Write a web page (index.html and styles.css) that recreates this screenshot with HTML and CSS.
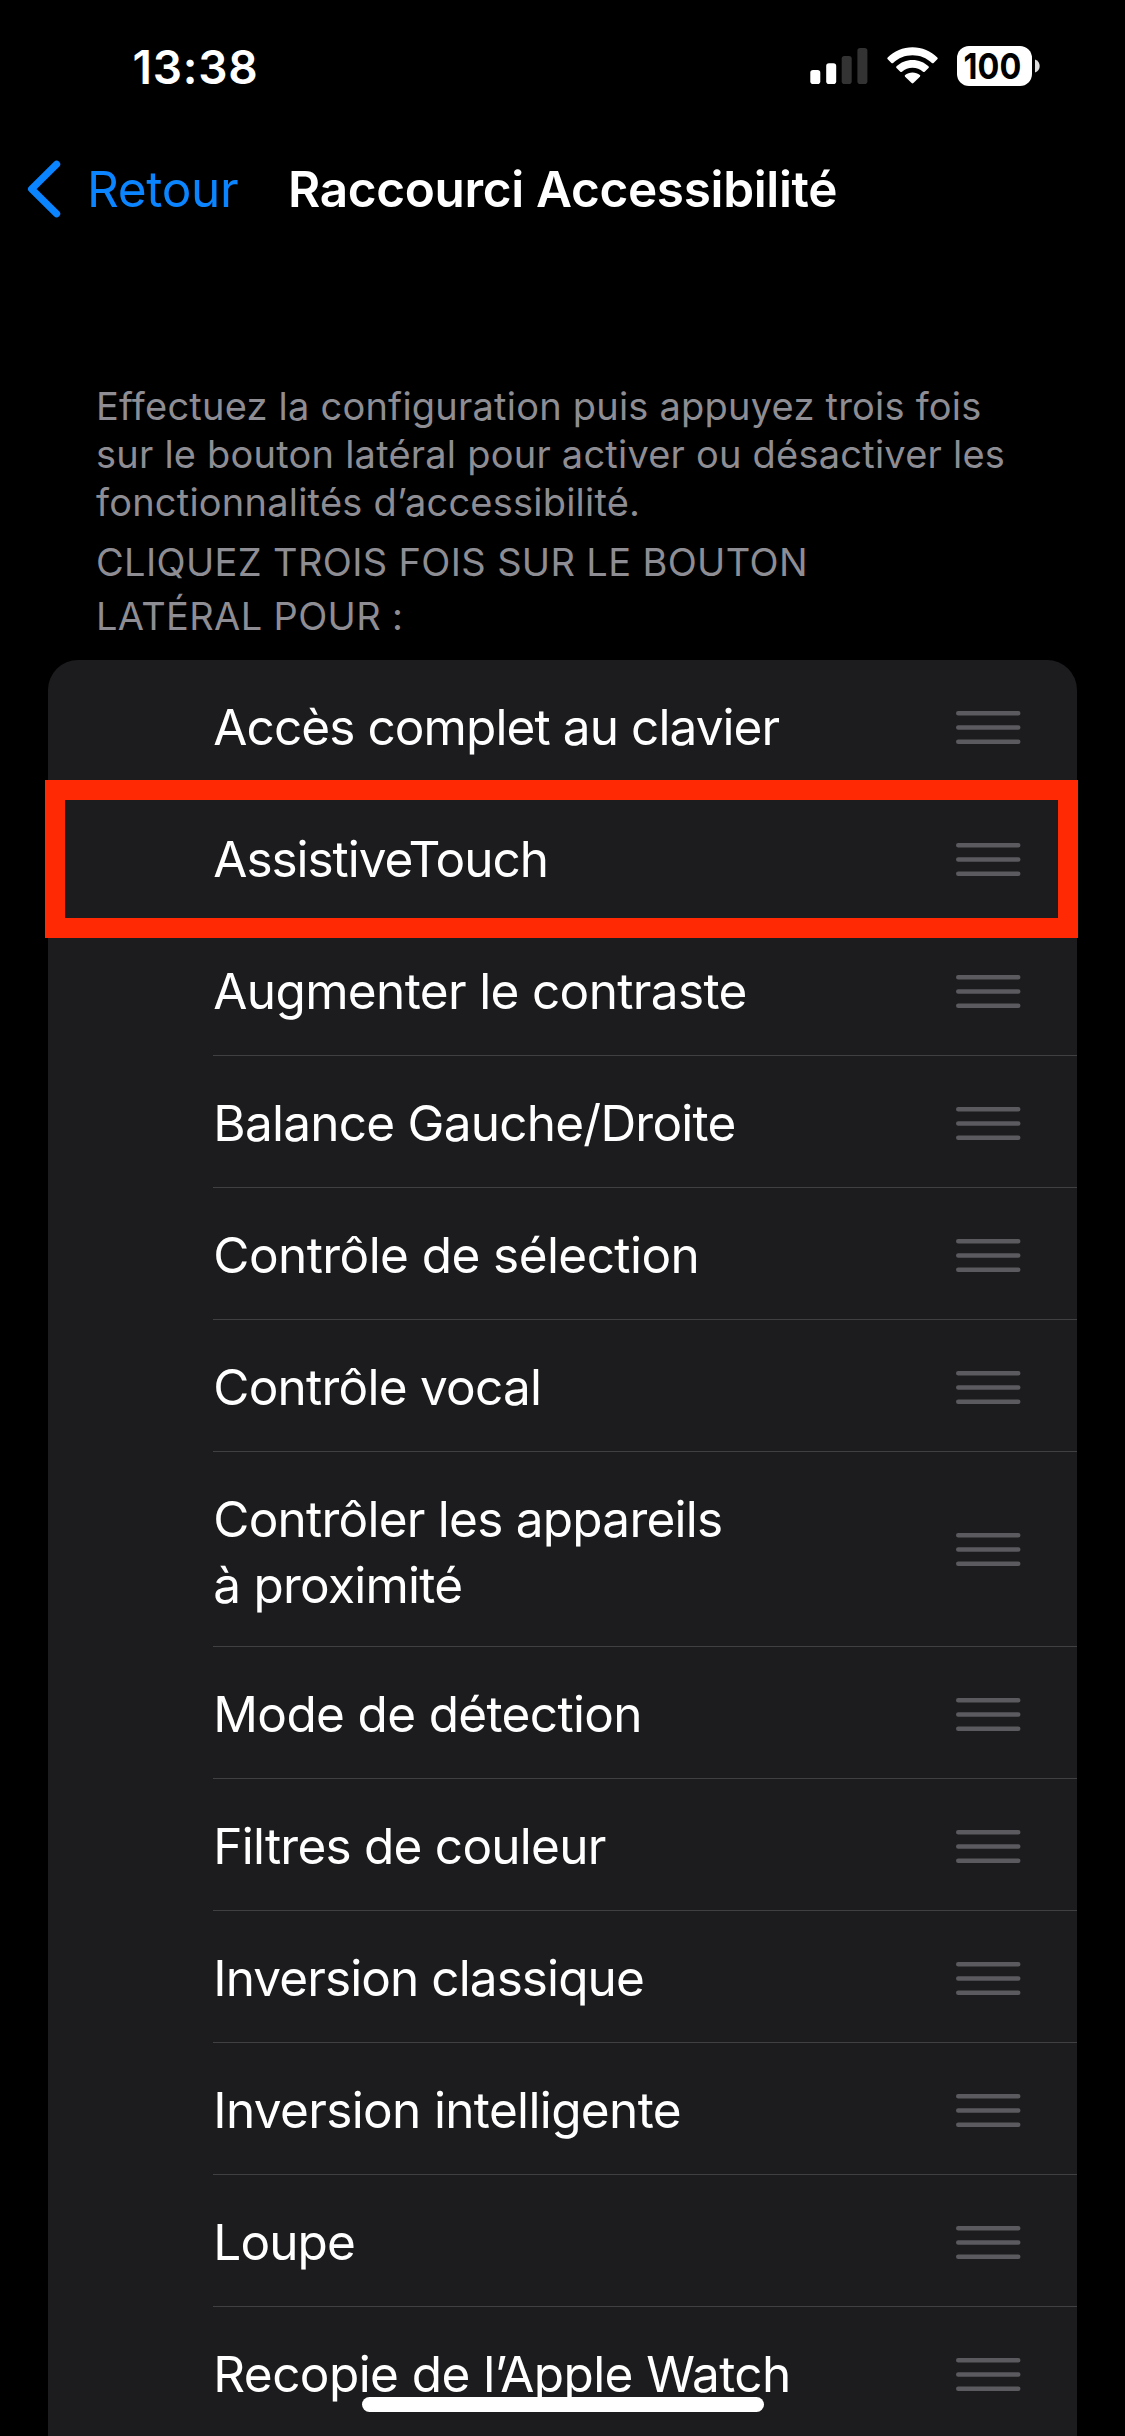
FILE: index.html
```html
<!DOCTYPE html>
<html lang="fr">
<head>
<meta charset="utf-8">
<title>Raccourci Accessibilité</title>
<link rel="stylesheet" href="styles.css">
</head>
<body>
<svg class="defs" width="0" height="0" aria-hidden="true">
  <symbol id="grip" viewBox="0 0 65 33">
    <path d="M2.2 2.2H62.3M2.2 16.5H62.3M2.2 30.8H62.3" stroke="#5a5a5f" stroke-width="4.4" stroke-linecap="round"/>
  </symbol>
</svg>
<div class="screen">
  <header class="status">
    <span class="time">13:38</span>
    <div class="indicators">
      <svg class="signal" width="58" height="40" viewBox="0 0 58 40">
        <rect x="0.3" y="24" width="10" height="14" rx="2.8" fill="#fff"/>
        <rect x="16.2" y="17.3" width="10" height="20.7" rx="2.8" fill="#fff"/>
        <rect x="31.7" y="10" width="10" height="28" rx="2.8" fill="#333"/>
        <rect x="47.4" y="2" width="10" height="36" rx="2.8" fill="#333"/>
      </svg>
      <svg class="wifi" width="51" height="40" viewBox="0 0 51 40">
        <path fill="#fff" d="M25.5 1.2C35 1.2 44 5 50.3 11.4Q51.2 12.3 50.3 13.2L46.6 16.9Q45.8 17.6 44.9 16.9C39.6 11.9 32.8 9.2 25.5 9.2S11.4 11.9 6.1 16.9Q5.2 17.6 4.4 16.9L.7 13.2Q-.2 12.3 .7 11.4C7 5 16 1.2 25.5 1.2Z"/>
        <path fill="#fff" d="M25.5 13.9C31.7 13.9 37.3 16.2 41.5 20.2Q42.4 21.1 41.5 22L37.7 25.7Q36.9 26.5 36 25.7C33.1 23.2 29.5 21.8 25.5 21.8S17.9 23.2 15 25.7Q14.1 26.5 13.3 25.7L9.5 22Q8.6 21.1 9.5 20.2C13.7 16.2 19.3 13.9 25.5 13.9Z"/>
        <path fill="#fff" d="M25.5 26.6C28.3 26.6 30.9 27.5 32.9 29Q33.7 29.8 32.9 30.7L26.4 37.1Q25.5 37.9 24.6 37.1L18.1 30.7Q17.3 29.8 18.1 29C20.1 27.5 22.7 26.6 25.5 26.6Z"/>
      </svg>
      <svg class="battery" width="84" height="52" viewBox="0 -6 84 52">
        <rect x="1" y="0" width="75" height="40" rx="12" fill="#fff"/>
        <path d="M79 13.5C82 14.7 83.7 17 83.7 20S82 25.400 79 26.600Z" fill="#ddd"/>
        <text x="7.600" y="33" textLength="57.700" lengthAdjust="spacingAndGlyphs" class="level">100</text>
      </svg>
    </div>
  </header>
  <nav class="nav">
    <a class="back">
      <svg class="chevron" width="34" height="58" viewBox="0 0 34 58"><path d="M29.600 4.200L4.600 29L29.600 53.800" fill="none" stroke="#0a84ff" stroke-width="7.200" stroke-linecap="round" stroke-linejoin="round"/></svg>
      <span>Retour</span>
    </a>
    <h1 class="title">Raccourci Accessibilité</h1>
  </nav>
  <main>
    <p class="intro">Effectuez la configuration puis appuyez trois fois<br>sur le bouton latéral pour activer ou désactiver les<br>fonctionnalités d’accessibilité.</p>
    <h2 class="section">CLIQUEZ TROIS FOIS SUR LE BOUTON<br>LATÉRAL POUR :</h2>
    <ul class="list">
      <li class="row tighter"><span class="label">Accès complet au clavier</span><svg class="grip"><use href="#grip"/></svg></li>
      <li class="row tightest selected"><span class="label">AssistiveTouch</span><svg class="grip"><use href="#grip"/></svg></li>
      <li class="row"><span class="label">Augmenter le contraste</span><svg class="grip"><use href="#grip"/></svg></li>
      <li class="row tight"><span class="label">Balance Gauche/Droite</span><svg class="grip"><use href="#grip"/></svg></li>
      <li class="row loose"><span class="label">Contrôle de sélection</span><svg class="grip"><use href="#grip"/></svg></li>
      <li class="row tight"><span class="label">Contrôle vocal</span><svg class="grip"><use href="#grip"/></svg></li>
      <li class="row double tight"><span class="label">Contrôler les appareils<br>à proximité</span><svg class="grip"><use href="#grip"/></svg></li>
      <li class="row"><span class="label">Mode de détection</span><svg class="grip"><use href="#grip"/></svg></li>
      <li class="row tight"><span class="label">Filtres de couleur</span><svg class="grip"><use href="#grip"/></svg></li>
      <li class="row tighter"><span class="label">Inversion classique</span><svg class="grip"><use href="#grip"/></svg></li>
      <li class="row"><span class="label">Inversion intelligente</span><svg class="grip"><use href="#grip"/></svg></li>
      <li class="row tighter"><span class="label">Loupe</span><svg class="grip"><use href="#grip"/></svg></li>
      <li class="row loose"><span class="label">Recopie de l’Apple Watch</span><svg class="grip"><use href="#grip"/></svg></li>
    </ul>
  </main>
  <div class="home"></div>
</div>
</body>
</html>
```
FILE: styles.css
```css
* { box-sizing: border-box; }
html, body { margin: 0; background: #000; }
body { font-family: Inter, "Liberation Sans", sans-serif; color: #fff; }
.defs { position: absolute; }

.screen {
  position: relative;
  width: 1125px;
  height: 2436px;
  overflow: hidden;
  background: #000;
}

.status {
  display: flex;
  justify-content: space-between;
  height: 156px;
  padding: 37px 85px 0 132.5px;
}
.time { font-size: 46px; font-weight: 600; line-height: 60px; letter-spacing: 0.8px; }
.indicators { display: flex; padding-top: 9px; }
.wifi { margin-left: 19px; }
.battery { margin: -6px 0 0 18px; }
.level { font: 700 35.5px Inter, "Liberation Sans", sans-serif; fill: #000; }

.nav {
  display: flex;
  height: 66px;
  padding-left: 27px;
  font-size: 49.5px;
  line-height: 66px;
  letter-spacing: -0.34px;
}
.back { display: flex; width: 261px; color: #0a84ff; }
.chevron { margin: 4px 26px 0 0; }
.title { margin: 0; font-size: inherit; font-weight: 600; white-space: nowrap; }

.intro, .section {
  margin: 0;
  padding-left: 96px;
  color: #8d8d93;
  font-size: 38px;
  font-weight: 400;
  white-space: nowrap;
}
.intro { margin-top: 160px; line-height: 48px; letter-spacing: 0.22px; }
.section { margin-top: 9px; line-height: 54px; letter-spacing: 0.36px; }

.list {
  margin: 17px 48px 0;
  padding: 0;
  list-style: none;
  background: #1c1c1e;
  border-radius: 30px 30px 0 0;
}
.row {
  position: relative;
  display: flex;
  justify-content: space-between;
  align-items: flex-start;
  height: 132px;
  padding: 34px 56px 0 165.3px;
  font-size: 49.5px;
  line-height: 66px;
  letter-spacing: -0.65px;
}
.row.double { height: 195px; }
.row.loose { letter-spacing: -0.57px; }
.row.tight { letter-spacing: -0.76px; }
.row.tighter { letter-spacing: -0.91px; }
.row.tightest { letter-spacing: -1.04px; }
.label { white-space: nowrap; }
.grip { width: 65px; height: 33px; margin-top: 17px; }
.double .grip { margin-top: 47px; }

.row::after {
  content: "";
  position: absolute;
  left: 165px;
  right: 0;
  bottom: 0;
  height: 1px;
  background: #404043;
}
.row.selected::after {
  left: -3px;
  right: -1px;
  top: -12px;
  bottom: -14px;
  height: auto;
  z-index: 1;
  border: 20px solid #ff2a04;
  background: none;
}

.home {
  position: absolute;
  left: 362px;
  bottom: 24px;
  width: 402px;
  height: 15px;
  border-radius: 8px;
  background: #fff;
}
```
